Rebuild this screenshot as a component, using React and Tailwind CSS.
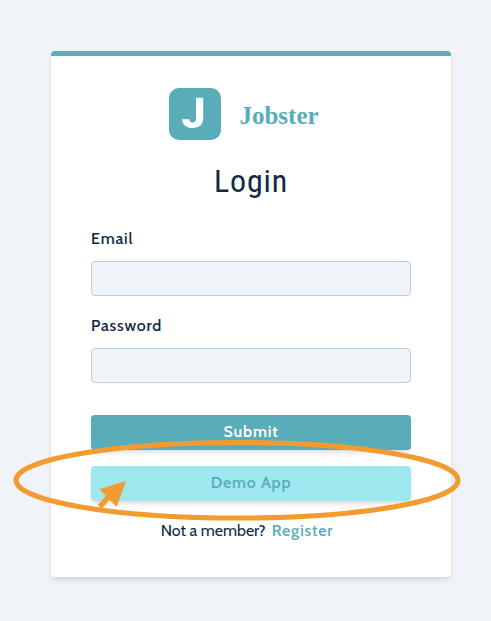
function LogoMark() {
  return (
    <svg className="h-[52px] w-[52px]" viewBox="0 0 52 52" aria-hidden="true">
      <rect width="52" height="52" rx="10" fill="#58adb9" />
      <path
        d="M27 9.700H34.200V30.500C34.200 36.500 30 40 23.800 40C17.500 40 13.500 36.800 13 31.200H20.200C20.500 33.500 21.700 34.600 23.700 34.600C26 34.600 27 33.200 27 30.300Z"
        fill="#fff"
      />
    </svg>
  );
}

function Field({ id, label, type }) {
  return (
    <div className="flex flex-col gap-[10px]">
      <label htmlFor={id} className="text-base leading-6 font-medium tracking-wider">
        {label}
      </label>
      <input
        id={id}
        name={id}
        type={type}
        className="h-[35px] w-full rounded border border-[#bccce0] bg-[#f0f4f8] px-3 outline-none"
      />
    </div>
  );
}

function Highlight() {
  return (
    <svg
      className="pointer-events-none absolute -top-7 -left-20 h-[84px] w-[456px] max-w-none"
      viewBox="11 438 456 84"
      fill="none"
      aria-hidden="true"
    >
      <ellipse cx="237" cy="480.200" rx="221" ry="37.800" stroke="#f29b30" strokeWidth="5" />
      <path
        d="M126 481L116.700 507L109.700 499.700L101.700 508.700L97.700 505L106 495.700L99.300 489.300Z"
        fill="#f29b30"
      />
    </svg>
  );
}

export default function App() {
  return (
    <main className="min-h-screen overflow-hidden bg-[#f0f4f8] py-[51px] pr-10 pl-[51px] font-['Cabin','Lato',sans-serif] text-[#102a43]">
      <form
        className="mx-auto w-full max-w-[400px] rounded border-t-[5px] border-[#58adb9] bg-white px-10 pt-8 pb-[34px] shadow-md"
        onSubmit={(event) => event.preventDefault()}
      >
        <div className="flex items-center justify-center gap-[18px] pr-[14px]">
          <LogoMark />
          <span className="pt-1 font-['Liberation_Serif',serif] text-[25px] leading-8 font-bold text-[#58adb9]">
            Jobster
          </span>
        </div>
        <h1 className="mt-[21px] text-center font-['Roboto_Condensed','Roboto',sans-serif] text-[32px] leading-10 tracking-wide">
          Login
        </h1>
        <div className="mt-[26px] flex flex-col gap-[18px]">
          <Field id="email" label="Email" type="email" />
          <Field id="password" label="Password" type="password" />
        </div>
        <div className="mt-8 flex flex-col gap-4">
          <button
            type="submit"
            className="h-[35px] w-full rounded bg-[#58adb9] pb-[2px] text-base font-semibold tracking-wider text-white shadow-md"
          >
            Submit
          </button>
          <div className="relative">
            <button
              type="button"
              className="block h-[35px] w-full rounded bg-[#9fe8f0] pb-[2px] text-base font-semibold tracking-wider text-[#58adb9] shadow-md"
            >
              Demo App
            </button>
            <Highlight />
          </div>
        </div>
        <p className="mt-[18px] flex justify-center gap-[6px] pr-2 text-base leading-6">
          Not a member?
          <a href="#register" className="font-medium tracking-wider text-[#58adb9]">
            Register
          </a>
        </p>
      </form>
    </main>
  );
}
